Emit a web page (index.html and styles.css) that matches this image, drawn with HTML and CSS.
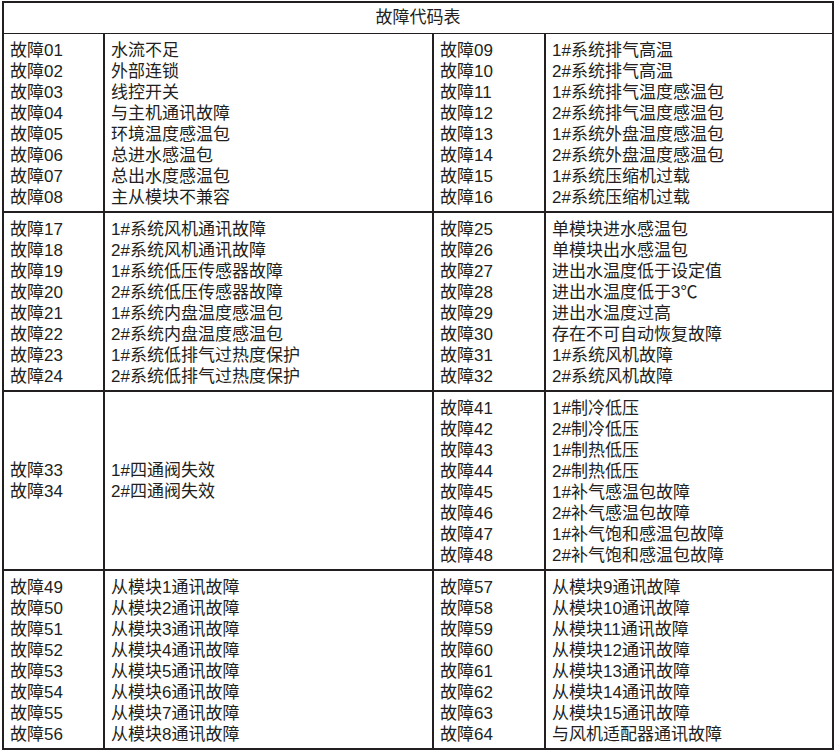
FILE: index.html
```html
<!DOCTYPE html>
<html lang="zh">
<head>
<meta charset="utf-8">
<link rel="stylesheet" href="styles.css">
</head>
<body>
<div class="table">
  <div class="title">故障代码表</div>
  <div class="section">
    <div class="cell"><div>故障01</div><div>故障02</div><div>故障03</div><div>故障04</div><div>故障05</div><div>故障06</div><div>故障07</div><div>故障08</div></div>
    <div class="cell bl"><div>水流不足</div><div>外部连锁</div><div>线控开关</div><div>与主机通讯故障</div><div>环境温度感温包</div><div>总进水感温包</div><div>总出水度感温包</div><div>主从模块不兼容</div></div>
    <div class="cell bl"><div>故障09</div><div>故障10</div><div>故障11</div><div>故障12</div><div>故障13</div><div>故障14</div><div>故障15</div><div>故障16</div></div>
    <div class="cell bl"><div>1#系统排气高温</div><div>2#系统排气高温</div><div>1#系统排气温度感温包</div><div>2#系统排气温度感温包</div><div>1#系统外盘温度感温包</div><div>2#系统外盘温度感温包</div><div>1#系统压缩机过载</div><div>2#系统压缩机过载</div></div>
  </div>
  <div class="section">
    <div class="cell"><div>故障17</div><div>故障18</div><div>故障19</div><div>故障20</div><div>故障21</div><div>故障22</div><div>故障23</div><div>故障24</div></div>
    <div class="cell bl"><div>1#系统风机通讯故障</div><div>2#系统风机通讯故障</div><div>1#系统低压传感器故障</div><div>2#系统低压传感器故障</div><div>1#系统内盘温度感温包</div><div>2#系统内盘温度感温包</div><div>1#系统低排气过热度保护</div><div>2#系统低排气过热度保护</div></div>
    <div class="cell bl"><div>故障25</div><div>故障26</div><div>故障27</div><div>故障28</div><div>故障29</div><div>故障30</div><div>故障31</div><div>故障32</div></div>
    <div class="cell bl"><div>单模块进水感温包</div><div>单模块出水感温包</div><div>进出水温度低于设定值</div><div>进出水温度低于3℃</div><div>进出水温度过高</div><div>存在不可自动恢复故障</div><div>1#系统风机故障</div><div>2#系统风机故障</div></div>
  </div>
  <div class="section">
    <div class="cell mid"><div>故障33</div><div>故障34</div></div>
    <div class="cell bl mid"><div>1#四通阀失效</div><div>2#四通阀失效</div></div>
    <div class="cell bl"><div>故障41</div><div>故障42</div><div>故障43</div><div>故障44</div><div>故障45</div><div>故障46</div><div>故障47</div><div>故障48</div></div>
    <div class="cell bl"><div>1#制冷低压</div><div>2#制冷低压</div><div>1#制热低压</div><div>2#制热低压</div><div>1#补气感温包故障</div><div>2#补气感温包故障</div><div>1#补气饱和感温包故障</div><div>2#补气饱和感温包故障</div></div>
  </div>
  <div class="section">
    <div class="cell"><div>故障49</div><div>故障50</div><div>故障51</div><div>故障52</div><div>故障53</div><div>故障54</div><div>故障55</div><div>故障56</div></div>
    <div class="cell bl"><div>从模块1通讯故障</div><div>从模块2通讯故障</div><div>从模块3通讯故障</div><div>从模块4通讯故障</div><div>从模块5通讯故障</div><div>从模块6通讯故障</div><div>从模块7通讯故障</div><div>从模块8通讯故障</div></div>
    <div class="cell bl"><div>故障57</div><div>故障58</div><div>故障59</div><div>故障60</div><div>故障61</div><div>故障62</div><div>故障63</div><div>故障64</div></div>
    <div class="cell bl"><div>从模块9通讯故障</div><div>从模块10通讯故障</div><div>从模块11通讯故障</div><div>从模块12通讯故障</div><div>从模块13通讯故障</div><div>从模块14通讯故障</div><div>从模块15通讯故障</div><div>与风机适配器通讯故障</div></div>
  </div>
</div>
</body>
</html>
```
FILE: styles.css
```css
html, body {
  margin: 0;
  padding: 0;
  background: #ffffff;
}
body {
  font-family: "Liberation Sans", "Noto Sans CJK SC", sans-serif;
  color: #231f20;
  font-size: 17px;
}
.table {
  margin: 1px 0 0 2px;
  width: 832px;
  border: 2px solid #231f20;
  box-sizing: border-box;
}
.title {
  height: 30px;
  line-height: 30px;
  text-align: center;
  border-bottom: 1px solid #231f20;
}
.section {
  display: grid;
  grid-template-columns: 99px 329px 112px 1fr;
  height: 177px;
}
.section + .section {
  border-top: 2px solid #231f20;
}
.cell {
  padding: 6px 6px 3px;
  line-height: 21px;
  white-space: nowrap;
}
.bl {
  border-left: 2px solid #231f20;
}
.mid {
  display: flex;
  flex-direction: column;
  justify-content: center;
  padding-top: 4px;
  padding-bottom: 4px;
}
```
